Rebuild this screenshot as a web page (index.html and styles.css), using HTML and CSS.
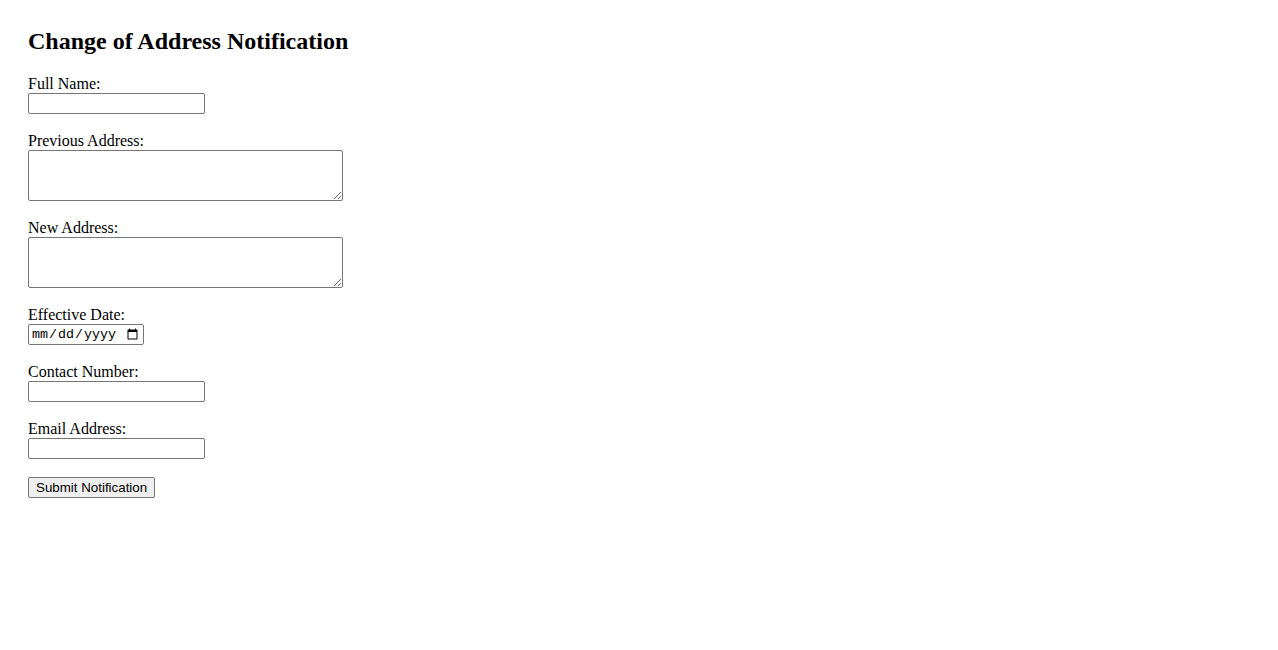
FILE: index.html
```html
<!DOCTYPE html>
<html lang="en">
<head>
<meta charset="utf-8">
<title>Change of Address Notification</title>
<link rel="stylesheet" href="styles.css">
</head>
<body>
<main class="page">
  <h2 class="title">Change of Address Notification</h2>
  <form class="form">
    <div class="field">
      <label class="label" for="name">Full Name:</label>
      <input class="input input-text" type="text" id="name">
    </div>
    <div class="field">
      <label class="label" for="prev">Previous Address:</label>
      <textarea class="input input-area" id="prev"></textarea>
    </div>
    <div class="field">
      <label class="label" for="new">New Address:</label>
      <textarea class="input input-area" id="new"></textarea>
    </div>
    <div class="field">
      <label class="label" for="date">Effective Date:</label>
      <input class="input input-date" type="date" id="date">
    </div>
    <div class="field">
      <label class="label" for="phone">Contact Number:</label>
      <input class="input input-text" type="tel" id="phone">
    </div>
    <div class="field">
      <label class="label" for="email">Email Address:</label>
      <input class="input input-text" type="email" id="email">
    </div>
    <div class="actions">
      <button class="button" type="submit">Submit Notification</button>
    </div>
  </form>
</main>
</body>
</html>
```
FILE: styles.css
```css
html, body {
  margin: 0;
  background: #ffffff;
}

body {
  font-family: "Liberation Serif", "Times New Roman", serif;
  font-size: 16px;
  color: #000000;
}

.page {
  padding: 27px 28px;
}

.title {
  margin: 0 0 22px;
  font-size: 24px;
  line-height: 28px;
  font-weight: bold;
}

.form {
  display: flex;
  flex-direction: column;
  align-items: flex-start;
}

.field {
  display: flex;
  flex-direction: column;
  align-items: flex-start;
  margin-bottom: 20px;
}

.label {
  display: block;
  line-height: 14px;
  padding-bottom: 2px;
}

.input {
  box-sizing: border-box;
  margin: 0;
  border: 1px solid #767676;
  border-radius: 2px;
  background: #ffffff;
  padding: 1px 2px;
  font-family: "Liberation Sans", Arial, sans-serif;
  font-size: 13.333px;
}

.input-text {
  width: 177px;
  height: 21px;
}

.input-area {
  width: 315px;
  height: 51px;
  resize: both;
  font-family: "Liberation Mono", monospace;
}

.input-date {
  width: 116px;
  height: 21px;
  font-family: "Liberation Mono", monospace;
  font-size: 13.333px;
  color: #000;
}

.actions {
  margin-top: -2px;
}

.button {
  box-sizing: border-box;
  height: 21px;
  padding: 1px 7px;
  margin: 0;
  border: 1px solid #767676;
  border-radius: 2px;
  background: #efefef;
  font-family: "Liberation Sans", Arial, sans-serif;
  font-size: 13.333px;
  color: #000;
}
```
